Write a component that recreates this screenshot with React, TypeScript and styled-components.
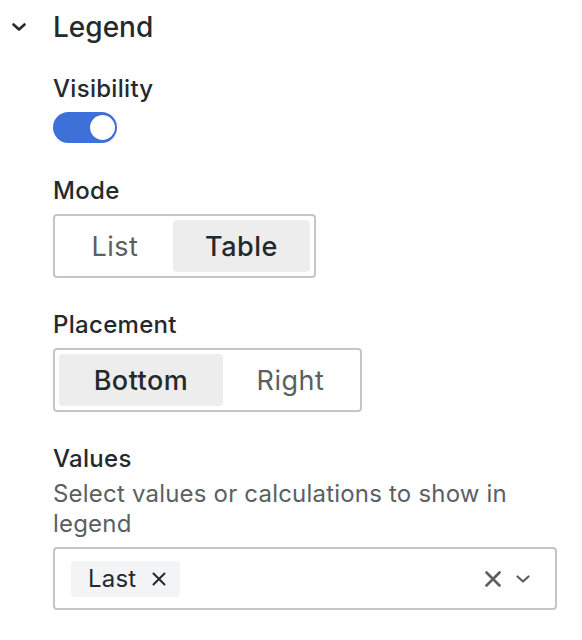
import React from "react";
import styled, { createGlobalStyle } from "styled-components";

const Global = createGlobalStyle`
  html, body { margin: 0; padding: 0; background: #ffffff; }
  body { font-family: Inter, "Noto Sans", sans-serif; color: #24292e; }
  * { box-sizing: border-box; }
`;

const Panel = styled.div`
  width: 582px;
  height: 640px;
  padding: 0 25px 0 0;
  background: #fff;
`;

const Header = styled.div`
  display: flex;
  align-items: center;
  height: 54px;
  margin-bottom: 19px;
`;

const Chevron = styled.div`
  width: 53px;
  display: flex;
  align-items: center;
  padding-left: 12px;
  color: #24292e;
`;

const Title = styled.h2`
  margin: 0;
  font-size: 28px;
  font-weight: 500;
  letter-spacing: 0;
`;

const Body = styled.div`
  padding-left: 53px;
  display: flex;
  flex-direction: column;
`;

const Field = styled.div<{ $gap?: number }>`
  display: flex;
  flex-direction: column;
  margin-bottom: ${(p) => p.$gap ?? 32}px;
`;

const Label = styled.div`
  font-size: 24px;
  font-weight: 500;
  line-height: 31px;
  letter-spacing: 0.3px;
  margin-bottom: 8px;
`;

const Description = styled.div`
  font-size: 24px;
  font-weight: 400;
  line-height: 30px;
  letter-spacing: 0.2px;
  color: #5b5f63;
  margin-top: -3px;
  margin-bottom: 8px;
  width: 470px;
`;

const Switch = styled.div<{ $on: boolean }>`
  width: 64px;
  height: 31px;
  border-radius: 16px;
  background: ${(p) => (p.$on ? "#3d71d9" : "#ccc")};
  position: relative;
  &::after {
    content: "";
    position: absolute;
    top: 3px;
    left: ${(p) => (p.$on ? "37px" : "3px")};
    width: 25px;
    height: 25px;
    border-radius: 50%;
    background: #fff;
    box-shadow: 0 0 1px rgba(0, 0, 0, 0.3);
  }
`;

const RadioGroup = styled.div`
  display: inline-flex;
  align-self: flex-start;
  border: 2px solid #c4c5c6;
  border-radius: 4px;
  padding: 4px;
  gap: 2px;
`;

const RadioButton = styled.div<{ $active?: boolean; $w: number }>`
  width: ${(p) => p.$w}px;
  height: 52px;
  display: flex;
  align-items: center;
  justify-content: center;
  border-radius: 4px;
  font-size: 27px;
  letter-spacing: 0.5px;
  font-weight: ${(p) => (p.$active ? 500 : 400)};
  color: ${(p) => (p.$active ? "#24292e" : "#5b5f63")};
  background: ${(p) => (p.$active ? "#ededed" : "transparent")};
`;

const Select = styled.div`
  height: 63px;
  border: 2px solid #c4c5c6;
  border-radius: 4px;
  display: flex;
  align-items: center;
  padding: 0 25px 0 16px;
`;

const Chip = styled.div`
  display: flex;
  align-items: center;
  gap: 16px;
  height: 36px;
  padding: 0 14px 0 17px;
  background: #f3f4f5;
  border-radius: 4px;
  font-size: 24px;
  letter-spacing: 0.2px;
  color: #24292e;
`;

const Spacer = styled.div`
  flex: 1;
`;

const Icons = styled.div`
  display: flex;
  align-items: center;
  gap: 15px;
  color: #5b5f63;
`;

const ChevronDown = ({ w = 14, h = 8, stroke = 2.4 }: { w?: number; h?: number; stroke?: number }) => (
  <svg width={w + 2} height={h + 2} viewBox={`-1 -1 ${w + 2} ${h + 2}`} fill="none">
    <path d={`M0.5 0.5 L${w / 2} ${h - 0.5} L${w - 0.5} 0.5`} stroke="currentColor" strokeWidth={stroke} strokeLinecap="round" strokeLinejoin="round" />
  </svg>
);

const Cross = ({ size = 16, stroke = 2.4 }: { size?: number; stroke?: number }) => (
  <svg width={size} height={size} viewBox={`0 0 ${size} ${size}`} fill="none">
    <path d={`M1.5 1.5 L${size - 1.5} ${size - 1.5} M${size - 1.5} 1.5 L1.5 ${size - 1.5}`} stroke="currentColor" strokeWidth={stroke} strokeLinecap="round" />
  </svg>
);

export default function App() {
  return (
    <Panel>
      <Global />
      <Header>
        <Chevron>
          <ChevronDown w={12} h={6} stroke={2.6} />
        </Chevron>
        <Title>Legend</Title>
      </Header>
      <Body>
        <Field $gap={32}>
          <Label>Visibility</Label>
          <Switch $on />
        </Field>
        <Field $gap={31}>
          <Label>Mode</Label>
          <RadioGroup>
            <RadioButton $w={112}>List</RadioButton>
            <RadioButton $w={137} $active>Table</RadioButton>
          </RadioGroup>
        </Field>
        <Field $gap={31}>
          <Label>Placement</Label>
          <RadioGroup>
            <RadioButton $w={164} $active>Bottom</RadioButton>
            <RadioButton $w={131}>Right</RadioButton>
          </RadioGroup>
        </Field>
        <Field>
          <Label>Values</Label>
          <Description>Select values or calculations to show in legend</Description>
          <Select>
            <Chip>
              Last
              <Cross size={14} stroke={2} />
            </Chip>
            <Spacer />
            <Icons>
              <Cross size={16} stroke={2.6} />
              <ChevronDown w={12} h={6} stroke={2.2} />
            </Icons>
          </Select>
        </Field>
      </Body>
    </Panel>
  );
}
